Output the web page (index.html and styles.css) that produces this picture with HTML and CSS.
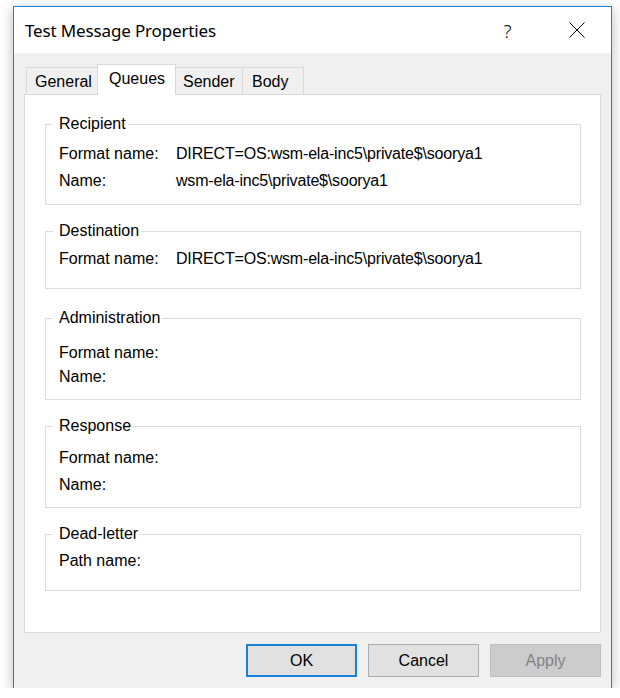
FILE: index.html
```html
<!DOCTYPE html>
<html lang="en">
<head>
<meta charset="utf-8">
<title>Test Message Properties</title>
<link rel="stylesheet" href="styles.css">
</head>
<body>
<div class="window">
  <div class="titlebar">
    <span class="title">Test Message Properties</span>
    <div class="caption">
      <span class="cap-btn help">?</span>
      <span class="cap-btn close">
        <svg width="16" height="16" viewBox="0 0 16 16"><path d="M0.5 0.5 L15.5 15.5 M15.5 0.5 L0.5 15.5" stroke="#000" stroke-width="1" fill="none"/></svg>
      </span>
    </div>
  </div>
  <div class="client">
    <div class="tabs">
      <div class="tab t-general">General</div>
      <div class="tab active t-queues">Queues</div>
      <div class="tab t-sender">Sender</div>
      <div class="tab t-body">Body</div>
    </div>
    <div class="panel">
      <fieldset class="group g-recipient">
        <legend>Recipient</legend>
        <div class="row"><span class="label">Format name:</span><span class="value">DIRECT=OS:wsm-ela-inc5\private$\soorya1</span></div>
        <div class="row"><span class="label">Name:</span><span class="value">wsm-ela-inc5\private$\soorya1</span></div>
      </fieldset>
      <fieldset class="group g-destination">
        <legend>Destination</legend>
        <div class="row"><span class="label">Format name:</span><span class="value">DIRECT=OS:wsm-ela-inc5\private$\soorya1</span></div>
      </fieldset>
      <fieldset class="group g-admin">
        <legend>Administration</legend>
        <div class="row tight"><span class="label">Format name:</span><span class="value"></span></div>
        <div class="row tight"><span class="label">Name:</span><span class="value"></span></div>
      </fieldset>
      <fieldset class="group g-response">
        <legend>Response</legend>
        <div class="row"><span class="label">Format name:</span><span class="value"></span></div>
        <div class="row"><span class="label">Name:</span><span class="value"></span></div>
      </fieldset>
      <fieldset class="group g-dead">
        <legend>Dead-letter</legend>
        <div class="row"><span class="label">Path name:</span><span class="value"></span></div>
      </fieldset>
    </div>
    <div class="buttons">
      <button class="btn default">OK</button>
      <button class="btn">Cancel</button>
      <button class="btn disabled" disabled>Apply</button>
    </div>
  </div>
</div>
</body>
</html>
```
FILE: styles.css
```css
html, body {
  margin: 0;
  background: #ffffff;
}
body {
  padding: 6px 0 0 13px;
  font-family: "Liberation Sans", Arial, sans-serif;
  font-size: 16px;
  color: #000;
}
.window {
  width: 597px;
  height: 681px;
  border: 1px solid #1883d7;
  border-bottom: none;
  background: #f0f0f0;
  box-shadow: 0 3px 12px rgba(0, 0, 0, 0.28);
  display: flex;
  flex-direction: column;
}
.titlebar {
  height: 46px;
  background: #ffffff;
  display: flex;
  align-items: center;
  padding-left: 11px;
}
.title {
  font-family: "Noto Sans", "Open Sans", sans-serif;
  font-size: 17px;
  letter-spacing: -0.15px;
  color: #000;
}
.caption {
  margin-left: auto;
  display: flex;
  height: 46px;
}
.cap-btn {
  width: 69px;
  height: 46px;
  display: flex;
  align-items: center;
  justify-content: center;
}
.help {
  font-family: "Noto Sans", "Open Sans", sans-serif;
  font-size: 19px;
  font-weight: 300;
  color: #000;
  padding-top: 1px;
}
.close svg {
  display: block;
}
.client {
  flex: 1;
  display: flex;
  flex-direction: column;
  padding: 11px 10px 10px 10px;
}
.tabs {
  display: flex;
  align-items: flex-end;
  height: 30px;
  padding-left: 2px;
}
.tab {
  height: 27px;
  box-sizing: border-box;
  border: 1px solid #d9d9d9;
  border-bottom: none;
  background: #f0f0f0;
  padding-top: 4px;
  line-height: 20px;
  white-space: nowrap;
  margin-left: -1px;
}
.tab:first-child {
  margin-left: 0;
}
.t-general { width: 72px; padding-left: 8px; }
.t-queues { width: 79px; padding-left: 11px; }
.t-sender { width: 68px; padding-left: 7px; }
.t-body { width: 62px; padding-left: 9px; }
.tab.active {
  height: 31px;
  margin-bottom: -1px;
  background: #ffffff;
  position: relative;
  z-index: 1;
  padding-top: 4px;
}
.panel {
  height: 539px;
  box-sizing: border-box;
  border: 1px solid #d9d9d9;
  background: #ffffff;
  padding: 20px 19px 0 20px;
  display: flex;
  flex-direction: column;
}
.group {
  margin: 0;
  border: 1px solid #dcdcdc;
  padding: 0 10px 0 13px;
  min-inline-size: 0;
}
.group legend {
  margin-left: -6px;
  padding: 0 2px 0 6px;
  line-height: 18px;
  font-size: 16px;
}
.g-recipient { padding-top: 7px; padding-bottom: 10px; }
.g-destination { margin-top: 17px; padding-top: 5px; padding-bottom: 16px; }
.g-admin { margin-top: 20px; padding-top: 14px; padding-bottom: 10px; }
.g-response { margin-top: 17px; padding-top: 9px; padding-bottom: 9px; }
.g-dead { margin-top: 17px; padding-top: 4px; padding-bottom: 16px; }
.row {
  display: flex;
  line-height: 27px;
  white-space: nowrap;
}
.row.tight {
  line-height: 24px;
}
.label {
  width: 117px;
  flex: none;
}
.value {
  letter-spacing: -0.18px;
}
.buttons {
  margin-top: 11px;
  display: flex;
  justify-content: flex-end;
  gap: 11px;
}
.btn {
  width: 111px;
  height: 33px;
  box-sizing: border-box;
  border: 1px solid #adadad;
  background: #e1e1e1;
  font-family: "Liberation Sans", Arial, sans-serif;
  font-size: 16px;
  color: #000;
  padding: 0;
}
.btn.default {
  border: 2px solid #1a7fd6;
}
.btn.disabled {
  background: #cccccc;
  border-color: #bfbfbf;
  color: #838383;
}
```
